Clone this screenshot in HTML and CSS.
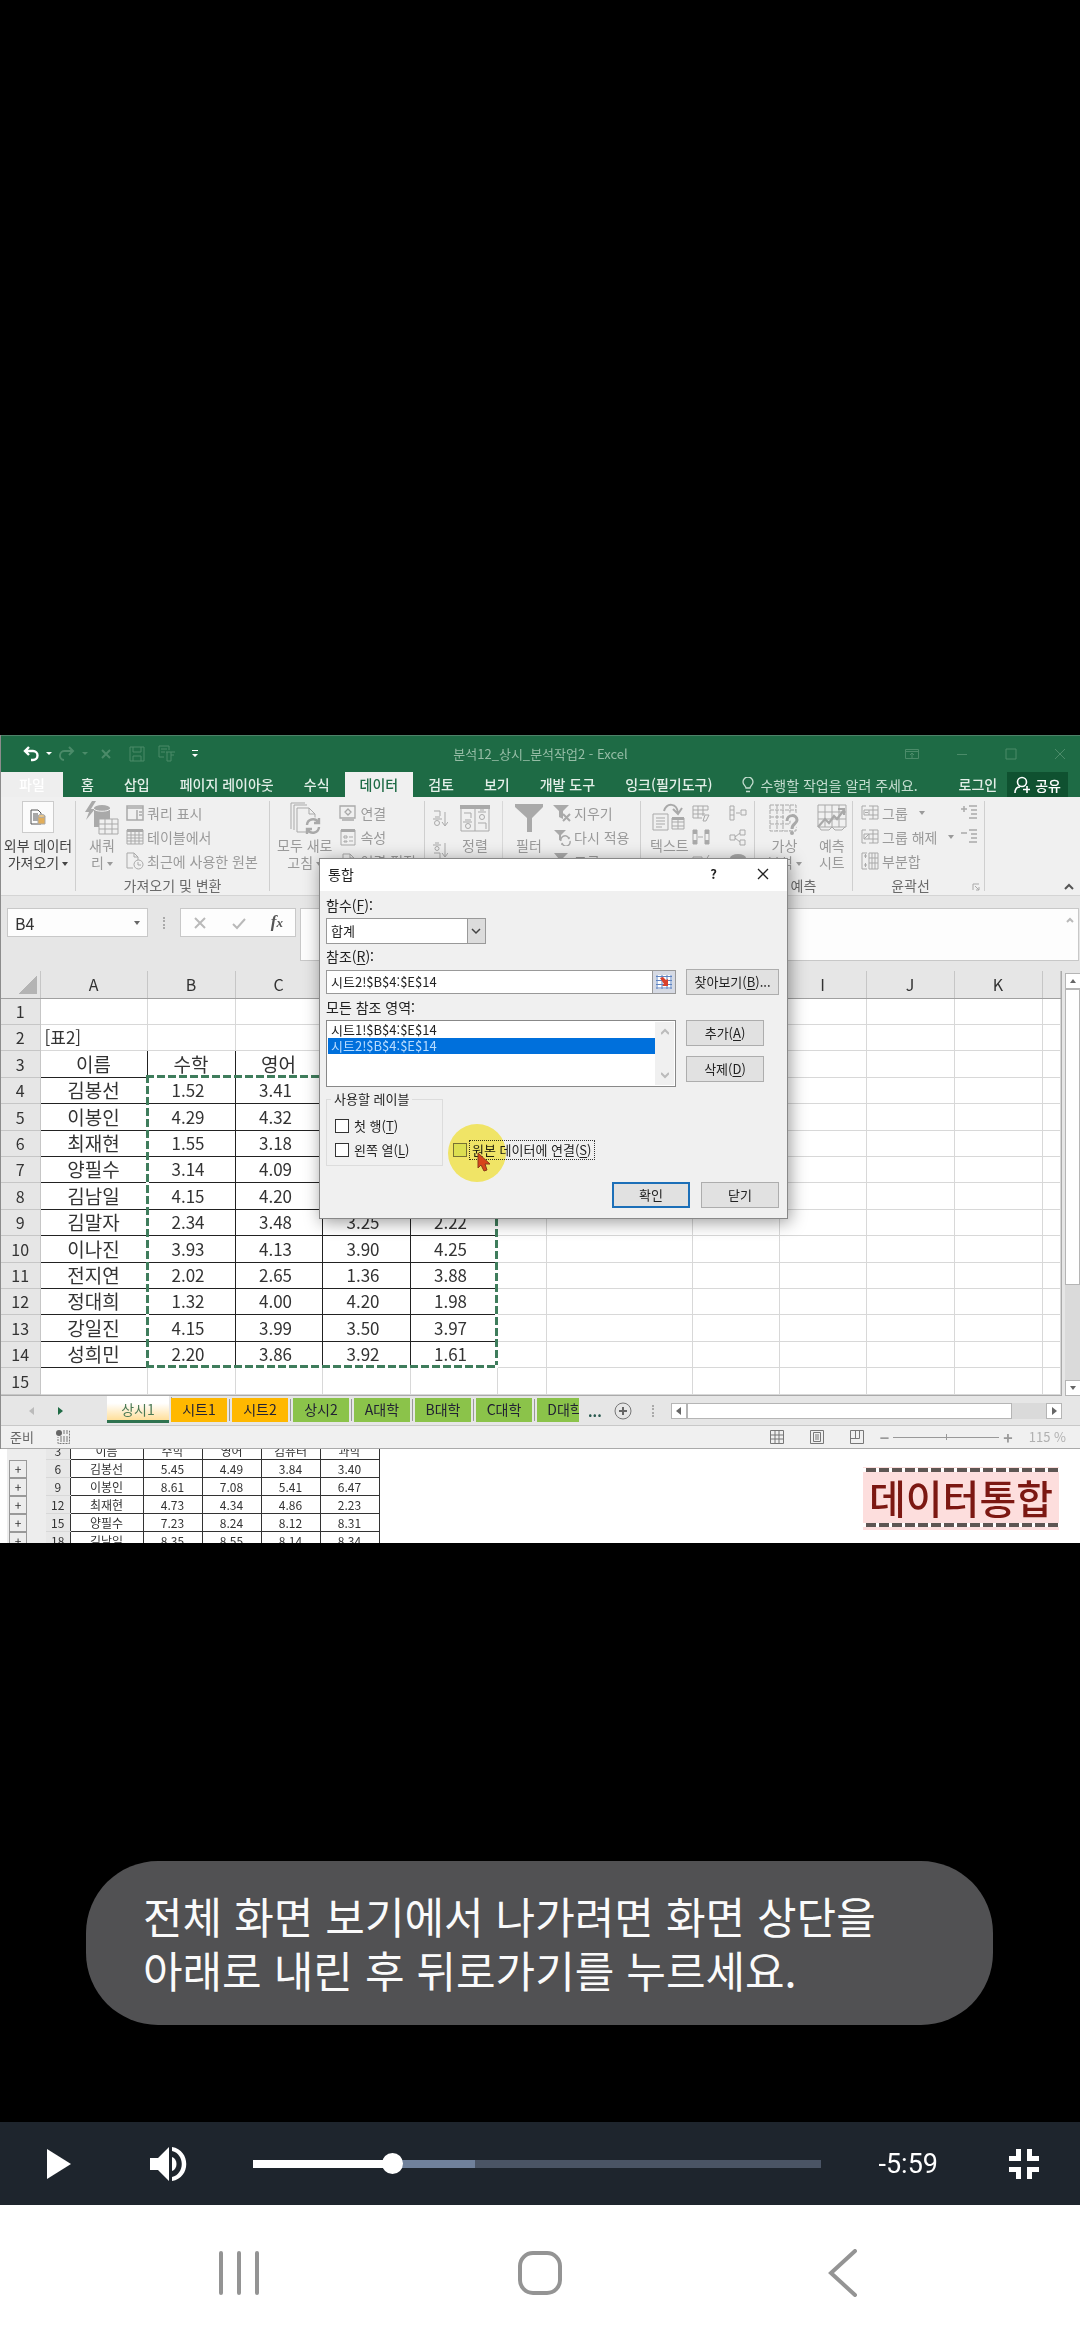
FILE: index.html
```html
<!DOCTYPE html>
<html lang="ko">
<head>
  <meta charset="UTF-8">
  <meta name="viewport" content="width=device-width, initial-scale=1.0">
  <title>데이터통합</title>
  <link rel="stylesheet" href="styles.css">
</head>
<body>
  <main class="stage">
    <div class="video">
      <section class="excel">
        <header class="titlebar">
          <div class="quick">
            <svg class="on" width="16" height="16" viewBox="0 0 16 16"><path d="M6 1L2 5l4 4M2 5h8a4 4 0 0 1 0 9H8" stroke-width="2.4"/></svg>
            <svg class="on" width="8" height="8" viewBox="0 0 8 8"><path class="fill" d="M1 2h6L4 5z"/></svg>
            <svg width="16" height="16" viewBox="0 0 16 16"><path d="M10 1l4 4-4 4M14 5H6a4 4 0 0 0-1 9" stroke-width="2"/></svg>
            <svg width="8" height="8" viewBox="0 0 8 8"><path class="fill" d="M1 2h6L4 5z"/></svg>
            <svg class="clear" width="10" height="10" viewBox="0 0 10 10"><path d="M1 1l8 8M9 1L1 9" stroke-width="2"/></svg>
            <svg class="save" width="16" height="16" viewBox="0 0 16 16"><path d="M1 1h14v14H1zM4 1v5h8V1M4 15v-5h8v5"/></svg>
            <svg width="18" height="18" viewBox="0 0 18 18"><path d="M1 1h10v4M1 1v11h5M3 4h6M3 7h4M8 7h9M9 7v9h4V7M13 10h3"/></svg>
            <svg class="on menu" width="8" height="8" viewBox="0 0 8 8"><path class="fill" d="M1 0h6v1H1zM1 4h6L4 7z"/></svg>
          </div>
          <h1>분석12_상시_분석작업2 - Excel</h1>
          <div class="window-buttons">
            <svg width="14" height="12" viewBox="0 0 14 12"><path d="M.5 1.5h13v9H.5zM.5 3.500h13M7 10V5M5 7l2-2 2 2"/></svg>
            <svg width="12" height="12" viewBox="0 0 12 12"><path d="M1 6.500h10"/></svg>
            <svg width="12" height="12" viewBox="0 0 12 12"><path d="M1 1h10v10H1z"/></svg>
            <svg width="12" height="12" viewBox="0 0 12 12"><path d="M1 1l10 10M11 1L1 11"/></svg>
          </div>
        </header>

        <nav class="tabs">
          <a class="file" href="#">파일</a>
          <a href="#">홈</a>
          <a href="#">삽입</a>
          <a href="#">페이지 레이아웃</a>
          <a href="#">수식</a>
          <a class="active" href="#">데이터</a>
          <a href="#">검토</a>
          <a href="#">보기</a>
          <a href="#">개발 도구</a>
          <a href="#">잉크(필기도구)</a>
          <a class="tell" href="#"><svg width="12" height="16" viewBox="0 0 12 16"><path d="M4 11C4 9 1 8 1 5a5 5 0 0 1 10 0c0 3-3 4-3 6zM4 14.500h4" fill="none" stroke="currentColor" stroke-width="1.300"/></svg>수행할 작업을 알려 주세요.</a>
          <a class="login" href="#">로그인</a>
          <a class="share" href="#"><svg width="17" height="18" viewBox="0 0 17 18"><path d="M1 17c0-4 2-6 5-6M13 10v7M9 13.500h7" fill="none" stroke="currentColor" stroke-width="1.600"/><circle cx="8" cy="6" r="4.500" fill="none" stroke="currentColor" stroke-width="1.600"/></svg>공유</a>
        </nav>

        <div class="ribbon">
          <div class="group g-external">
            <button class="big dark">
              <span class="frame"><svg width="18" height="18" viewBox="0 0 18 18"><path d="M2 2h7l3 3v11H2zM4 6h5M4 8h5M4 10h5M4 12h5" fill="none" stroke="#555"/><path d="M9 8h7v8H9z" fill="#e2ae5a"/><ellipse cx="12.500" cy="8" rx="3.500" ry="1.500" fill="#f0c987"/></svg></span>
              <span>외부 데이터<br>가져오기<i class="caret"></i></span>
            </button>
          </div>
          <div class="group g-query">
            <button class="big">
              <svg width="34" height="34" viewBox="0 0 34 34"><path class="solid" d="M7 0L0 11h4L1 19l9-11H6l5-8zM9 7h16v19H9z"/><ellipse class="solid" cx="17" cy="7" rx="8" ry="3"/><path d="M9 8c2 3 14 3 16 0" stroke="#f0f0f0"/><path class="paper" d="M14 18h19v15H14zM14 23h19M14 28h19M20 18v15M27 18v15"/></svg>
              <span>새쿼<br>리<i class="caret"></i></span>
            </button>
            <div class="rows">
              <button><svg width="18" height="18" viewBox="0 0 18 18"><path d="M1 2h16v14H1zM1 4h16M11 6v10M13 8h3M13 11h3" stroke-width="1.500"/></svg>쿼리 표시</button>
              <button><svg width="18" height="18" viewBox="0 0 18 18"><path d="M1 2h16v14H1zM1 7h16M1 10h16M1 13h16M5 4v12M9 4v12M13 4v12"/><path class="solid" d="M1 1h16v3H1z"/></svg>테이블에서</button>
              <button><svg width="18" height="18" viewBox="0 0 18 18"><path d="M7 16H1V1h7l4 4v3M8 1v4h4"/><circle cx="12.500" cy="12.500" r="4.500"/><path d="M12 10v3h3"/></svg>최근에 사용한 원본</button>
            </div>
            <p class="caption">가져오기 및 변환</p>
          </div>
          <div class="group g-connect">
            <button class="big">
              <svg width="34" height="34" viewBox="0 0 34 34"><path d="M3 28V2h14M6 29V4h13"/><path class="paper" d="M9 7h12l6 6v18H9zM21 7v6h6"/><circle cx="25" cy="25" r="9" fill="#f0f0f0" stroke="none"/><path d="M19 24a6 6 0 0 1 11-3M31 26a6 6 0 0 1-11 3M31 17v5h-5M19 33v-5h5" stroke-width="2.400"/></svg>
              <span>모두 새로<br>고침<i class="caret"></i></span>
            </button>
            <div class="rows">
              <button><svg width="18" height="18" viewBox="0 0 18 18"><path d="M1 2h15v12H1zM3 16h12M9 5l3 3-3 3-3-3z" stroke-width="1.300"/></svg>연결</button>
              <button><svg width="18" height="18" viewBox="0 0 18 18"><path d="M2 2h14v15H2zM5 8h3v2H5zM10 9h4M5 13h3v1H5zM10 13h4"/><path class="solid" d="M2 1h14v3H2z"/></svg>속성</button>
              <button><svg width="18" height="18" viewBox="0 0 18 18"><path d="M14 16H4V2h7l4 4v4M11 2v4h4"/></svg>연결 편집</button>
            </div>
          </div>
          <div class="group g-sort">
            <div class="rows sort-icons">
              <svg width="16" height="18" viewBox="0 0 16 18"><path d="M2 1h6v5M1 9h9M3 7h5M13 2v13M10 12l3 4 3-4"/><circle cx="5" cy="13" r="2.500"/></svg>
              <svg width="16" height="18" viewBox="0 0 16 18"><path d="M1 3h8M3 1h4M2 11h6v5M13 1v13M10 11l3 4 3-4"/><circle cx="5" cy="6.500" r="2"/></svg>
            </div>
            <button class="big">
              <svg width="30" height="34" viewBox="0 0 30 34"><path d="M1 5h28v25H1zM15 7v23M4 12h7v5M3 21h9M5 19h6M18 11h8M20 9h4M18 22h8v6"/><circle cx="8" cy="25" r="2.500"/><circle cx="22" cy="16" r="2.500"/><path class="solid" d="M0 4h30v4H0z"/></svg>
              <span>정렬</span>
            </button>
            <button class="big filter">
              <svg width="30" height="34" viewBox="0 0 30 34"><path class="solid" d="M1 3h28v3L18 17v14h-5V17L1 6z"/></svg>
              <span>필터</span>
            </button>
            <div class="rows">
              <button><svg width="18" height="18" viewBox="0 0 18 18"><path class="solid" d="M0 1h16l-6 6v8l-4-2V7z"/><path d="M10 10l7 7M17 10l-7 7" stroke-width="2"/></svg>지우기</button>
              <button><svg width="18" height="18" viewBox="0 0 18 18"><path class="solid" d="M1 2h12L8 7v6l-2-1V7z"/><path d="M8 13a4 4 0 0 1 8-2v-2M17 13a4 4 0 0 1-8 2v2" stroke-width="1.500"/></svg>다시 적용</button>
              <button><svg width="18" height="18" viewBox="0 0 18 18"><path class="solid" d="M1 1h14l-6 6v8l-3-2V7z"/></svg>고급</button>
            </div>
          </div>
          <div class="group g-tools">
            <button class="big">
              <svg width="34" height="34" viewBox="0 0 34 34"><path d="M1 13h15v16H1zM4 17h9M4 20h9M4 23h9M4 26h6M20 17h12v11H20zM20 21h12M20 25h12M26 17v11"/><path class="solid" d="M20 16h12v3H20z"/><path d="M12 10c3-9 13-8 14 2M21 8l5 5 4-6" stroke-width="2"/></svg>
              <span>텍스트</span>
            </button>
            <div class="rows">
              <svg width="18" height="18" viewBox="0 0 18 18"><path d="M1 2h15v4M1 2v12h9M1 6h15M1 10h12M6 2v12M11 2v10M11 17l2-6h4l-3 6z"/></svg>
              <svg width="18" height="18" viewBox="0 0 18 18"><path d="M1 2h4v14H1zM13 2h4v14h-4zM6 9h5"/><path class="solid" d="M1 2h4v4H1zM1 12h4v4H1zM13 2h4v4h-4zM13 12h4v4h-4z"/></svg>
              <svg width="18" height="18" viewBox="0 0 18 18"><path d="M1 5h9v10H1zM9 8l3 3 5-8"/></svg>
            </div>
            <div class="rows">
              <svg width="18" height="18" viewBox="0 0 18 18"><path d="M1 2h4v14H1zM1 6h4M1 11h4M7 9h4M12 6h5v5h-5z"/></svg>
              <svg width="18" height="18" viewBox="0 0 18 18"><path d="M1 7h5v5H1zM11 2h5v5h-5zM11 12h5v5h-5zM6 9l5-4M6 10l5 4"/></svg>
              <svg width="18" height="18" viewBox="0 0 18 18"><ellipse class="solid" cx="9" cy="6" rx="8" ry="4"/></svg>
            </div>
          </div>
          <div class="group g-forecast">
            <button class="big">
              <svg width="30" height="34" viewBox="0 0 30 34"><path d="M1 4h26v26H1zM1 9h26M1 16h26M1 23h26M8 4v26M14 4v26M21 4v26" stroke-dasharray="4 1"/><path d="M18 20c0-7 10-7 10-1 0 4-5 3-5 9" stroke="#f0f0f0" stroke-width="7"/><path d="M18 20c0-7 10-7 10-1 0 4-5 3-5 9" stroke-width="3"/><circle class="solid" cx="23" cy="32" r="2"/></svg>
              <span>가상<br>분석<i class="caret"></i></span>
            </button>
            <button class="big">
              <svg width="30" height="34" viewBox="0 0 30 34"><path d="M1 4h28v22H1zM1 11h28M1 18h28M8 4v22M15 4v22M22 4v22"/><path d="M1 26l7-8 4 4 5-7 3 3 7-9M21 8h6v6" stroke-width="2.200"/><path d="M2 26l2 3h8l3-3 3 3h7l3-3"/></svg>
              <span>예측<br>시트</span>
            </button>
            <p class="caption">예측</p>
          </div>
          <div class="group g-outline">
            <div class="rows">
              <button><svg width="18" height="18" viewBox="0 0 18 18"><path d="M5 2H1v13h4M3 6h5v5H3zM4 8.500h3M8 2h9v13H8M8 6h9M8 11h9M12 2v13"/></svg>그룹<i class="caret far"></i></button>
              <button><svg width="18" height="18" viewBox="0 0 18 18"><path d="M5 2H1v13h4M3 6h5v5H3zM3 11l5-5M8 2h9v13H8M8 6h9M8 11h9M12 2v13"/></svg>그룹 해제<i class="caret far"></i></button>
              <button><svg width="18" height="18" viewBox="0 0 18 18"><path d="M6 1H1v16h5M3 4h3M3 13h3M4.500 2v4M4.500 11v4M8 1h9v16H8zM8 6h9M8 11h9M11 1v16M14 1v16"/></svg>부분합</button>
            </div>
            <div class="rows detail">
              <svg width="18" height="18" viewBox="0 0 18 18"><path d="M1 5h6M4 2v6M9 2h8M11 6h6M11 10h6M9 14h8" stroke-width="1.500"/></svg>
              <svg width="18" height="18" viewBox="0 0 18 18"><path d="M1 5h6M9 2h8M11 6h6M11 10h6M9 14h8" stroke-width="1.500"/></svg>
            </div>
            <p class="caption">윤곽선</p>
            <svg class="launcher" width="8" height="8" viewBox="0 0 8 8"><path d="M1 7V1h6M3 3l4 4M7 4v3H4"/></svg>
          </div>
          <svg class="collapse" width="10" height="8" viewBox="0 0 10 8"><path d="M1 6l4-4 4 4"/></svg>
        </div>

        <div class="formula">
          <label class="namebox"><input type="text" value="B4" aria-label="이름 상자"><i class="caret"></i></label>
          <span class="dots"></span>
          <div class="fx">
            <svg width="14" height="14" viewBox="0 0 14 14"><path d="M2 2l10 10M12 2L2 12" stroke="#b9b9b9"/></svg>
            <svg width="14" height="14" viewBox="0 0 14 14"><path d="M1 8l4 4 8-9" stroke="#b9b9b9"/></svg>
            <em>f<small>x</small></em>
          </div>
          <div class="formula-text">
            <input type="text" aria-label="수식">
            <svg width="8" height="8" viewBox="0 0 8 8"><path d="M1 5l3-3 3 3" stroke="#b9b9b9"/></svg>
          </div>
        </div>

        <div class="sheet">
          <div class="cells">
            <table>
              <colgroup>
                <col class="w-num"><col class="w-a"><col class="w-b"><col class="w-c"><col class="w-b"><col class="w-c">
                <col class="w-f"><col class="w-g"><col class="w-c"><col class="w-c"><col class="w-b"><col class="w-b"><col>
              </colgroup>
              <thead>
                <tr><th class="corner"></th><th>A</th><th>B</th><th>C</th><th>D</th><th>E</th><th>F</th><th>G</th><th>H</th><th>I</th><th>J</th><th>K</th><th></th></tr>
              </thead>
              <tbody>
                <tr><th>1</th><td></td><td></td><td></td><td></td><td></td><td></td><td></td><td></td><td></td><td></td><td></td><td></td></tr>
                <tr><th>2</th><td class="note">[표2]</td><td></td><td></td><td></td><td></td><td></td><td></td><td></td><td></td><td></td><td></td><td></td></tr>
                <tr class="data"><th>3</th><td>이름</td><td class="head">수학</td><td class="head">영어</td><td></td><td></td><td></td><td></td><td></td><td></td><td></td><td></td><td></td></tr>
                <tr class="data"><th>4</th><td>김봉선</td><td>1.52</td><td>3.41</td><td></td><td></td><td></td><td></td><td></td><td></td><td></td><td></td><td></td></tr>
                <tr class="data"><th>5</th><td>이봉인</td><td>4.29</td><td>4.32</td><td></td><td></td><td></td><td></td><td></td><td></td><td></td><td></td><td></td></tr>
                <tr class="data"><th>6</th><td>최재현</td><td>1.55</td><td>3.18</td><td></td><td></td><td></td><td></td><td></td><td></td><td></td><td></td><td></td></tr>
                <tr class="data"><th>7</th><td>양필수</td><td>3.14</td><td>4.09</td><td></td><td></td><td></td><td></td><td></td><td></td><td></td><td></td><td></td></tr>
                <tr class="data"><th>8</th><td>김남일</td><td>4.15</td><td>4.20</td><td></td><td></td><td></td><td></td><td></td><td></td><td></td><td></td><td></td></tr>
                <tr class="data"><th>9</th><td>김말자</td><td>2.34</td><td>3.48</td><td>3.25</td><td>2.22</td><td></td><td></td><td></td><td></td><td></td><td></td><td></td></tr>
                <tr class="data"><th>10</th><td>이나진</td><td>3.93</td><td>4.13</td><td>3.90</td><td>4.25</td><td></td><td></td><td></td><td></td><td></td><td></td><td></td></tr>
                <tr class="data"><th>11</th><td>전지연</td><td>2.02</td><td>2.65</td><td>1.36</td><td>3.88</td><td></td><td></td><td></td><td></td><td></td><td></td><td></td></tr>
                <tr class="data"><th>12</th><td>정대희</td><td>1.32</td><td>4.00</td><td>4.20</td><td>1.98</td><td></td><td></td><td></td><td></td><td></td><td></td><td></td></tr>
                <tr class="data"><th>13</th><td>강일진</td><td>4.15</td><td>3.99</td><td>3.50</td><td>3.97</td><td></td><td></td><td></td><td></td><td></td><td></td><td></td></tr>
                <tr class="data"><th>14</th><td>성희민</td><td>2.20</td><td>3.86</td><td>3.92</td><td>1.61</td><td></td><td></td><td></td><td></td><td></td><td></td><td></td></tr>
                <tr><th>15</th><td></td><td></td><td></td><td></td><td></td><td></td><td></td><td></td><td></td><td></td><td></td><td></td></tr>
              </tbody>
            </table>
            <div class="ants"></div>
          </div>
          <div class="vscroll">
            <button aria-label="위로"><i class="caret up"></i></button>
            <span class="thumb"></span>
            <button aria-label="아래로"><i class="caret"></i></button>
          </div>
        </div>

        <div class="sheet-tabs">
          <div class="tab-nav"><i class="arrow left off"></i><i class="arrow right green"></i></div>
          <div class="tab-list">
            <a class="current" href="#">상시1</a>
            <a class="orange" href="#">시트1</a>
            <a class="orange" href="#">시트2</a>
            <a href="#">상시2</a>
            <a href="#">A대학</a>
            <a href="#">B대학</a>
            <a href="#">C대학</a>
            <a href="#">D대학</a>
          </div>
          <span class="more">...</span>
          <button class="add" aria-label="새 시트"><svg width="18" height="18" viewBox="0 0 18 18"><circle cx="9" cy="9" r="8" fill="none" stroke="#777"/><path d="M9 5v8M5 9h8" stroke="#666" stroke-width="2"/></svg></button>
          <span class="dots"></span>
          <div class="hscroll">
            <button aria-label="왼쪽"><i class="arrow left"></i></button>
            <span class="thumb"></span>
            <button aria-label="오른쪽"><i class="arrow right"></i></button>
          </div>
        </div>

        <footer class="status">
          <span>준비</span>
          <svg width="14" height="14" viewBox="0 0 14 14"><circle cx="3" cy="3" r="3" fill="#666"/><path d="M7 1h6.500v12.500H2V7M7 3h6M4 7h8M4 9h8M4 11h8" fill="none" stroke="#777" stroke-dasharray="2 1"/></svg>
          <div class="views">
            <svg width="14" height="14" viewBox="0 0 14 14"><path d="M.5.5h13v13H.5zM5 0v14M9 0v14M0 5h14M0 9h14"/></svg>
            <svg width="14" height="14" viewBox="0 0 14 14"><path d="M.5.5h13v13H.5zM3.500 2.500h7v9h-7zM5 5h4M5 7h4M5 9h4"/></svg>
            <svg width="14" height="14" viewBox="0 0 14 14"><path d="M.5.5h13v13H.5zM.5 8.500h9v-8M5.500.5v8"/></svg>
          </div>
          <div class="zoom">
            <span>−</span><i class="zoom-line"></i><span>+</span>
          </div>
          <span class="percent">115 %</span>
        </footer>

        <form class="dialog">
          <div class="dialog-title">
            <h2>통합</h2>
            <button type="button" class="plain" aria-label="도움말">?</button>
            <button type="button" class="plain" aria-label="창 닫기"><svg width="12" height="12" viewBox="0 0 12 12"><path d="M1 1l10 10M11 1L1 11" stroke="#222" stroke-width="1.300"/></svg></button>
          </div>
          <div class="dialog-body">
            <label for="func">함수(<u>F</u>):</label>
            <div class="combo">
              <select id="func"><option>합계</option></select>
              <svg width="10" height="8" viewBox="0 0 10 8"><path d="M1 2l4 4 4-4" fill="none" stroke="#444" stroke-width="1.500"/></svg>
            </div>
            <label for="ref">참조(<u>R</u>):</label>
            <div class="ref">
              <input id="ref" type="text" value="시트2!$B$4:$E$14">
              <button type="button" aria-label="범위 선택"><svg width="16" height="14" viewBox="0 0 16 14"><path fill="#fff" d="M0 0h16v14H0z"/><path d="M0 1.500h16M0 5.500h16M0 9.500h16M0 13h16M1 0v14M6 0v14M11 0v14M15 0v14" stroke="#5f83c0"/><path d="M4 3l3-1 3 3 2-1v7H6l2-2z" fill="#d9412c"/></svg></button>
            </div>
            <button type="button">찾아보기(<u>B</u>)...</button>
            <label id="all">모든 참조 영역:</label>
            <div class="listbox">
              <ul role="listbox" aria-labelledby="all">
                <li role="option">시트1!$B$4:$E$14</li>
                <li role="option" aria-selected="true">시트2!$B$4:$E$14</li>
              </ul>
              <div class="list-scroll">
                <svg width="8" height="8" viewBox="0 0 8 8"><path d="M0 6l4-4 4 4"/></svg>
                <svg width="8" height="8" viewBox="0 0 8 8"><path d="M0 2l4 4 4-4"/></svg>
              </div>
            </div>
            <div class="side">
              <button type="button">추가(<u>A</u>)</button>
              <button type="button">삭제(<u>D</u>)</button>
            </div>
          </div>
          <div class="options">
            <fieldset>
              <legend>사용할 레이블</legend>
              <label><input type="checkbox">첫 행(<u>T</u>)</label>
              <label><input type="checkbox">왼쪽 열(<u>L</u>)</label>
            </fieldset>
            <label class="link-source">
              <input type="checkbox"><span class="focus">원본 데이터에 연결(<u>S</u>)</span>
              <span class="highlight"></span>
              <svg class="pointer" width="14" height="20" viewBox="0 0 14 20"><path d="M1 1v15l3-3 3 6 3-1-2-6h5z" fill="#d8451b" stroke="#8a3a1c"/></svg>
            </label>
          </div>
          <div class="dialog-buttons">
            <button type="button" class="default">확인</button>
            <button type="button">닫기</button>
          </div>
        </form>
      </section>

      <section class="below">
        <table>
          <tr><td class="plus"></td><th>3</th><td class="name">이름</td><td>수학</td><td>영어</td><td>컴퓨터</td><td>과학</td></tr>
          <tr><td class="plus"><span>+</span></td><th>6</th><td class="name">김봉선</td><td>5.45</td><td>4.49</td><td>3.84</td><td>3.40</td></tr>
          <tr><td class="plus"><span>+</span></td><th>9</th><td class="name">이봉인</td><td>8.61</td><td>7.08</td><td>5.41</td><td>6.47</td></tr>
          <tr><td class="plus"><span>+</span></td><th>12</th><td class="name">최재현</td><td>4.73</td><td>4.34</td><td>4.86</td><td>2.23</td></tr>
          <tr><td class="plus"><span>+</span></td><th>15</th><td class="name">양필수</td><td>7.23</td><td>8.24</td><td>8.12</td><td>8.31</td></tr>
          <tr><td class="plus"><span>+</span></td><th>18</th><td class="name">김남일</td><td>8.35</td><td>8.55</td><td>8.14</td><td>8.34</td></tr>
        </table>
        <strong class="topic">데이터통합</strong>
      </section>
    </div>

    <p class="toast" role="status">전체 화면 보기에서 나가려면 화면 상단을<br>아래로 내린 후 뒤로가기를 누르세요.</p>
  </main>

  <div class="player">
    <button aria-label="재생"><svg width="40" height="40" viewBox="0 0 40 40"><path d="M8 5l24 15L8 35z"/></svg></button>
    <button aria-label="음량"><svg width="40" height="40" viewBox="0 0 40 40"><path d="M1 14h8L20 3v34L9 26H1z"/><path d="M23 13c6 2 6 12 0 14z"/><path d="M23 3c19 3 19 31 0 34v-4c13-3 13-23 0-26z"/></svg></button>
    <input type="range" min="0" max="1000" value="235" aria-label="재생 위치">
    <time>-5:59</time>
    <button aria-label="전체 화면 종료"><svg width="40" height="40" viewBox="0 0 40 40"><path d="M12 5h5v12H5v-5h7zM23 5h5v7h7v5H23zM5 23h12v12h-5v-7H5zM23 23h12v5h-7v7h-5z"/></svg></button>
  </div>

  <nav class="system">
    <button aria-label="최근 앱"><svg width="48" height="48" viewBox="0 0 48 48"><path d="M6 4v40M24 4v40M42 4v40"/></svg></button>
    <button aria-label="홈"><svg width="48" height="48" viewBox="0 0 48 48"><rect x="4" y="4" width="40" height="40" rx="13"/></svg></button>
    <button aria-label="뒤로"><svg width="48" height="48" viewBox="0 0 48 48"><path d="M38 2L14 24l24 22"/></svg></button>
  </nav>
</body>
</html>
```

FILE: styles.css
```css
* { box-sizing: border-box; }

body {
  margin: 0;
  min-height: 100vh;
  display: flex;
  flex-direction: column;
  background: #000;
  color: #333;
  font: 14px/20px "Noto Sans CJK KR", sans-serif;
}

h1, h2, p, ul { margin: 0; padding: 0; font-weight: 400; }

ul { list-style: none; }

a { color: inherit; text-decoration: none; }

svg { display: block; flex: none; }

button, input, select {
  font: inherit;
  color: inherit;
  margin: 0;
  padding: 0;
  border: 0;
  border-radius: 0;
  background: none;
  outline: 0;
}

/* Stage */

.stage {
  position: relative;
  flex: 1;
  display: flex;
  flex-direction: column;
  justify-content: center;
  padding-top: 156px;
}

.excel {
  position: relative;
  border-left: 1px solid #8c8c8c;
  background: #e6e6e6;
}

.caret {
  display: inline-block;
  flex: none;
  margin-left: 4px;
  border: 3px solid transparent;
  border-top: 4px solid;
  border-bottom: 0;
  vertical-align: middle;
}

.caret.up {
  border-top: 0;
  border-bottom: 4px solid;
}

.caret.far { margin-left: 8px; }

.arrow {
  display: block;
  border: 4px solid transparent;
}

.arrow.left { border-right: 5px solid; border-left: 0; }
.arrow.right { border-left: 5px solid; border-right: 0; }
.arrow.off { color: #bbb; }
.arrow.green { color: #1f6b45; }

.dots {
  width: 2px;
  height: 12px;
  border-left: 2px dotted #aaa;
}

/* Title bar */

.titlebar {
  display: grid;
  grid-template-columns: 1fr auto 1fr;
  align-items: center;
  height: 37px;
  background: #1e6b45;
  border-top: 1px solid #4f8269;
}

.titlebar h1 {
  font-size: 13px;
  color: #96bda6;
}

.titlebar svg {
  fill: none;
  stroke: #4b8b69;
}

.titlebar .fill { fill: #4b8b69; stroke: none; }
.titlebar .on { stroke: #fff; }
.titlebar .on .fill { fill: #fff; }

.quick {
  display: flex;
  align-items: center;
  gap: 6px;
  padding-left: 22px;
}

.quick .clear { margin: 0 12px 0 6px; }
.quick .save { margin-right: 7px; }
.quick .menu { margin-left: 9px; }

.window-buttons {
  display: flex;
  justify-content: flex-end;
  gap: 37px;
  padding-right: 14px;
}

/* Ribbon tabs */

.tabs {
  display: flex;
  height: 25px;
  background: #1e6b45;
  color: #e3efe8;
  line-height: 24px;
  font-weight: 500;
  white-space: nowrap;
}

.tabs a { padding: 0 15px; }

.tabs .file {
  width: 62px;
  margin-right: 3px;
  text-align: center;
  background: #eee;
  color: #fff;
}

.tabs .active {
  background: #f0f0f0;
  color: #1e6b45;
}

.tabs .tell,
.tabs .share {
  display: flex;
  align-items: center;
  gap: 6px;
  font-weight: 400;
  color: #c3dccf;
}

.tabs .login {
  margin-left: auto;
  padding-right: 10px;
}

.tabs .share {
  gap: 4px;
  margin-right: 12px;
  padding: 0 7px;
  background: #0f5130;
  color: #fff;
  font-weight: 500;
}

/* Ribbon */

.ribbon {
  display: flex;
  height: 99px;
  background: #f0f0f0;
  border-bottom: 1px solid #d4d4d4;
  color: #9a9a9a;
  line-height: 17px;
  white-space: nowrap;
}

.ribbon svg {
  fill: none;
  stroke: #a9a9a9;
}

.ribbon .solid { fill: #a9a9a9; stroke: none; }
.ribbon .paper { fill: #f0f0f0; }

.group {
  position: relative;
  display: flex;
  flex: none;
  margin: 4px 0;
  border-right: 1px solid #cfcfcf;
}

.g-external { width: 75px; justify-content: center; }
.g-query { width: 194px; padding-left: 9px; }
.g-connect { width: 155px; padding-left: 7px; }
.g-sort { width: 216px; padding-left: 7px; }
.g-tools { width: 114px; padding-left: 9px; }
.g-forecast { width: 98px; padding-left: 12px; gap: 15px; }
.g-outline { width: 132px; padding-left: 8px; }

.big {
  display: flex;
  flex-direction: column;
  align-items: center;
  gap: 2px;
  height: 72px;
  line-height: 17px;
  text-align: center;
}

.big.dark { gap: 4px; color: #444; }
.big .caret { margin-left: 3px; }

.big .frame {
  width: 32px;
  height: 32px;
  padding: 6px;
  border: 1px solid #ccc;
  background: #fbfbfb;
}

.rows {
  display: grid;
  grid-template-rows: repeat(3, 24px);
  align-content: start;
  align-items: center;
  padding-left: 7px;
}

.rows button {
  display: flex;
  align-items: center;
  gap: 3px;
}

.sort-icons {
  grid-template-rows: repeat(2, 32px);
  padding: 2px 12px 0 0;
}

.filter {
  margin-left: 12px;
  padding-left: 11px;
  border-left: 1px solid #d8d8d8;
}

.g-sort .big + .rows { padding-left: 9px; }
.g-tools .rows { padding-left: 3px; }
.g-tools .rows + .rows { padding-left: 19px; }
.g-outline .rows { padding-left: 0; }

.g-outline .detail {
  margin-left: auto;
  padding-right: 6px;
}

.caption {
  position: absolute;
  left: 0;
  right: 0;
  bottom: -3px;
  color: #6a6a6a;
  text-align: center;
}

.g-outline .caption { right: 16px; }

.launcher {
  position: absolute;
  right: 4px;
  bottom: 0;
}

.ribbon .collapse {
  margin: auto 6px 4px auto;
  stroke: #555;
  stroke-width: 2;
}

/* Formula bar */

.formula {
  display: flex;
  align-items: flex-start;
  padding: 12px 1px 10px 6px;
}

.formula svg { fill: none; stroke-width: 2; }
.formula .dots { margin: 9px 15px 0; }

.namebox,
.fx,
.formula-text {
  display: flex;
  align-items: center;
  height: 29px;
  border: 1px solid #c8c8c8;
  background: #fdfdfd;
}

.namebox {
  width: 141px;
  padding: 0 7px;
}

.namebox input {
  width: 100%;
  font-size: 16px;
}

.namebox .caret { color: #666; }

.fx {
  width: 116px;
  justify-content: space-between;
  padding: 0 12px;
}

.fx em {
  font: italic 700 17px/20px "Liberation Serif", serif;
  color: #555;
}

.fx small { font-size: 13px; }

.formula-text {
  flex: 1;
  height: 53px;
  margin-left: 4px;
  padding: 8px 4px;
  align-items: flex-start;
}

.formula-text input { flex: 1; }

/* Grid */

.sheet {
  display: flex;
  gap: 3px;
  height: 425px;
  overflow: hidden;
}

.cells {
  position: relative;
  flex: 1;
  overflow: hidden;
  border-right: 1px solid #aaa;
  border-bottom: 1px solid #aaa;
}

.sheet table {
  width: 100%;
  table-layout: fixed;
  border-collapse: collapse;
  font-size: 19px;
  line-height: 24px;
}

.w-num { width: 39px; }
.w-a { width: 107px; }
.w-b { width: 88px; }
.w-c { width: 87px; }
.w-f { width: 49px; }
.w-g { width: 146px; }

.sheet th {
  padding: 0;
  background: #e6e6e6;
  border: 1px solid #c6c6c6;
  border-left: 0;
  font-size: 16px;
  font-weight: 400;
}

.sheet thead th {
  height: 27px;
  border-top: 0;
  border-bottom-color: #a0a0a0;
}

.sheet .corner {
  background: linear-gradient(135deg, #e6e6e6 50%, #b4b4b4 50%) 17px 4px / 19px 19px no-repeat #e6e6e6;
}

.sheet td {
  height: 26px;
  padding: 0;
  background: #fff;
  border: 1px solid #d8d8d8;
  text-align: center;
}

/* row pitch is a little over 26px at this zoom */
.sheet tbody tr:nth-child(5n) td,
.sheet tbody tr:nth-child(5n + 3) td { height: 27px; }

.sheet td.note {
  padding-left: 4px;
  text-align: left;
  font-size: 17px;
}

.data td:nth-child(-n + 6) { border-color: #222; }
.data td:nth-child(n + 3):nth-child(-n + 6) { padding-right: 6px; font-size: 17px; }
.sheet .data td.head { padding: 0; font-size: 19px; }

/* copied range B4:E14 */
.ants {
  --h: repeating-linear-gradient(90deg, #3f7d5c 0 8px, #fff 8px 11px);
  --v: repeating-linear-gradient(#3f7d5c 0 8px, #fff 8px 11px);
  position: absolute;
  left: 145px;
  top: 104px;
  width: 352px;
  height: 293px;
  background:
    var(--h) top / 100% 3px no-repeat,
    var(--h) bottom / 100% 3px no-repeat,
    var(--v) left / 3px 100% no-repeat,
    var(--v) right / 3px 100% no-repeat;
}

.vscroll {
  display: flex;
  flex-direction: column;
  width: 15px;
  padding-top: 2px;
  background: linear-gradient(#e6e6e6 2px, #dadada 2px);
}

.vscroll button,
.hscroll button {
  display: grid;
  place-items: center;
  width: 16px;
  height: 16px;
  border: 1px solid #b5b5b5;
  background: #fff;
  color: #666;
}

.vscroll .caret { margin: 0; }
.vscroll button:last-child { margin-top: auto; }

.thumb {
  border: 1px solid #b5b5b5;
  background: #fff;
}

.vscroll .thumb { height: 70%; }

/* Sheet tabs */

.sheet-tabs {
  display: flex;
  align-items: center;
  height: 29px;
  padding-right: 18px;
}

.tab-nav {
  display: flex;
  gap: 24px;
  width: 106px;
  padding-left: 28px;
}

.tab-list {
  display: flex;
  gap: 5px;
  align-self: flex-start;
  width: 472px;
  overflow: hidden;
  line-height: 22px;
}

.tab-list a {
  flex: none;
  width: 56px;
  height: 24px;
  margin-top: 2px;
  background: #8bc34a;
  box-shadow: 3px 0 0 -1px #e6e6e6, 4px 0 0 -1px #999;
  color: #223;
  text-align: center;
}

.tab-list .orange { background: #ffb800; }

.tab-list .current {
  width: 62px;
  height: 27px;
  margin: 0 -3px 0 0;
  border-bottom: 3px solid #2f7350;
  background: linear-gradient(#fff 30%, #ffdf9a);
  color: #4c7a55;
  line-height: 26px;
}

.more {
  margin: 0 12px 0 9px;
  color: #2a5a50;
  font-weight: 700;
}

.sheet-tabs .dots { margin: 0 17px 0 20px; }

.hscroll {
  display: flex;
  flex: 1;
  background: #dadada;
}

.hscroll .thumb { flex: 1; margin-right: 34px; }

/* Status bar */

.status {
  display: flex;
  align-items: center;
  height: 24px;
  padding: 0 14px 0 9px;
  border-top: 1px solid #c8c8c8;
  border-bottom: 1px solid #aaa;
  background: #f0f0f0;
  color: #666;
  font-size: 13px;
}

.status > svg { margin-left: 22px; }

.views {
  display: flex;
  gap: 26px;
  margin-left: auto;
}

.views svg { fill: none; stroke: #777; }

.zoom {
  display: flex;
  align-items: center;
  gap: 4px;
  margin: 0 16px;
  font-size: 16px;
  font-weight: 700;
  color: #999;
}

.zoom-line {
  width: 106px;
  height: 10px;
  background:
    linear-gradient(#999, #999) center / 1px 6px no-repeat,
    linear-gradient(#999, #999) center / 100% 1px no-repeat;
}

.percent { color: #b0b0b0; }

/* Consolidate dialog */

.dialog {
  position: absolute;
  left: 318px;
  top: 123px;
  width: 469px;
  padding-bottom: 10px;
  border: 1px solid #888;
  background: #f0f0f0;
  box-shadow: 2px 3px 16px rgba(0, 0, 0, .4);
  color: #222;
  font-size: 13px;
  font-variant-ligatures: no-contextual;
}

.dialog-title {
  display: flex;
  align-items: center;
  height: 32px;
  padding: 0 18px 2px 8px;
  background: #fff;
}

.dialog-title h2 {
  flex: 1;
  font-size: 14px;
}

.dialog-title .plain { margin-left: 40px; font-weight: 700; }

.dialog u { text-underline-offset: 2px; }

.dialog-body {
  display: grid;
  grid-template-columns: 350px 93px;
  column-gap: 10px;
  padding: 2px 8px 0 6px;
}

.dialog-body > label {
  grid-column: 1 / -1;
  font-size: 14px;
  line-height: 25px;
}

.dialog-body > button,
.side button,
.dialog-buttons button {
  width: 78px;
  height: 26px;
  border: 1px solid #adadad;
  background: #e1e1e1;
  line-height: 20px;
}

.dialog-body > button { width: 93px; }

.combo {
  position: relative;
  grid-column: 1 / -1;
  width: 160px;
  height: 26px;
}

.combo select {
  appearance: none;
  width: 100%;
  height: 100%;
  padding: 0 4px;
  border: 1px solid #999;
  background: linear-gradient(90deg, #999 1px, #dcdcdc 1px) right / 18px 100% no-repeat #fff;
}

.combo svg {
  position: absolute;
  right: 5px;
  top: 9px;
  pointer-events: none;
}

.ref {
  display: flex;
  height: 24px;
  margin: 1px 0;
  border: 1px solid #999;
  background: #fff;
}

.ref input {
  flex: 1;
  padding: 0 4px;
}

.ref button {
  width: 23px;
  padding-left: 3px;
  border-left: 1px solid #999;
  background: #d6dae4;
}

.listbox {
  display: flex;
  height: 67px;
  padding: 1px;
  border: 1px solid #888;
  background: #fff;
  line-height: 16px;
}

.listbox ul { flex: 1; }
.listbox li { padding: 0 3px; }

.listbox [aria-selected] {
  background: #0070dc;
  color: #b8dcff;
}

.list-scroll {
  display: flex;
  flex-direction: column;
  justify-content: space-between;
  width: 19px;
  padding: 6px 6px;
  background: #f0f0f0;
}

.list-scroll svg {
  fill: none;
  stroke: #bbb;
  stroke-width: 2;
}

.side {
  display: grid;
  align-content: start;
  gap: 10px;
}

.options {
  display: flex;
  gap: 10px;
  padding: 2px 6px 0;
}

.options fieldset {
  width: 117px;
  margin: 0;
  padding: 5px 8px 3px;
  border: 1px solid #dcdcdc;
}

.options legend { margin-left: -4px; padding: 0 3px; }

.options label {
  display: flex;
  align-items: center;
  height: 24px;
}

.options input {
  appearance: none;
  width: 14px;
  height: 14px;
  margin-right: 5px;
  border: 1px solid #333;
  background: #fff;
}

.options .link-source {
  position: relative;
  align-self: flex-end;
  margin-bottom: 4px;
}

.options .link-source input {
  margin-right: 3px;
  border-color: #777;
  background: #dceac0;
}

.focus {
  padding: 0 2px;
  outline: 1px dotted #333;
  line-height: 18px;
}

.highlight {
  position: absolute;
  left: -5px;
  top: -14px;
  width: 58px;
  height: 58px;
  border-radius: 50%;
  background: #fff36c;
  mix-blend-mode: multiply;
}

.pointer {
  position: absolute;
  left: 24px;
  top: 14px;
}

.dialog-buttons {
  display: flex;
  justify-content: flex-end;
  gap: 11px;
  padding: 16px 8px 0;
}

.dialog-buttons .default { border: 2px solid #1c6fb8; }

/* Sheet behind the workbook */

.below {
  display: flex;
  justify-content: space-between;
  align-items: flex-start;
  height: 94px;
  overflow: hidden;
  padding: 0 21px 0 7px;
  background: #fff;
}

.below table {
  margin-top: -8px;
  border-collapse: collapse;
  font-size: 12px;
  line-height: 17px;
}

.below td,
.below th {
  width: 59px;
  height: 18px;
  padding: 0;
  border: 1px solid #333;
  text-align: center;
  font-weight: 400;
}

.below .name { width: 73px; }

.below th {
  width: 24px;
  border-width: 1px 0;
  border-color: #d8d8d8;
  background: #e8e8e8;
}

.below .plus {
  width: 39px;
  border: 0;
  background: #ededed;
}

.plus span {
  display: block;
  width: 18px;
  height: 18px;
  margin-left: 2px;
  border: 1px solid #999;
  line-height: 15px;
}

.topic {
  margin-top: 18px;
  padding: 6px 6px 8px;
  background:
    repeating-linear-gradient(90deg, #fff 0 3px, #5e5653 3px 13px) 0 1px / 100% 4px no-repeat,
    repeating-linear-gradient(90deg, #fff 0 3px, #5e5653 3px 13px) 0 56px / 100% 4px no-repeat,
    #fddedd;
  color: #7c1812;
  font-size: 40px;
  font-weight: 500;
  line-height: 49px;
}

/* Toast */

.toast {
  position: absolute;
  left: 86px;
  right: 87px;
  bottom: 97px;
  padding: 27px 57px 29px;
  border-radius: 72px;
  background: #515153;
  color: #fafafa;
  font-size: 43px;
  line-height: 54px;
}

/* Player controls */

.player {
  display: flex;
  align-items: center;
  height: 83px;
  padding: 0 36px 0 39px;
  background: #1e252d;
}

.player svg { fill: #fff; }

.player button + button { margin-left: 70px; }

.player input {
  appearance: none;
  flex: 1;
  height: 8px;
  margin: 0 57px 0 64px;
  background: linear-gradient(90deg, #fff 24%, #70819b 24% 39%, #4a5464 39%);
}

.player input::-webkit-slider-thumb {
  appearance: none;
  width: 21px;
  height: 21px;
  border-radius: 50%;
  background: #fff;
}

.player time {
  margin-right: 66px;
  color: #fff;
  font: 27px/32px Roboto, sans-serif;
}

/* System navigation */

.system {
  display: grid;
  grid-template-columns: repeat(3, 1fr);
  place-items: center;
  height: 135px;
  padding: 0 88px;
  background: #fff;
}

.system svg {
  fill: none;
  stroke: #949494;
  stroke-width: 4;
  stroke-linecap: round;
}
```
